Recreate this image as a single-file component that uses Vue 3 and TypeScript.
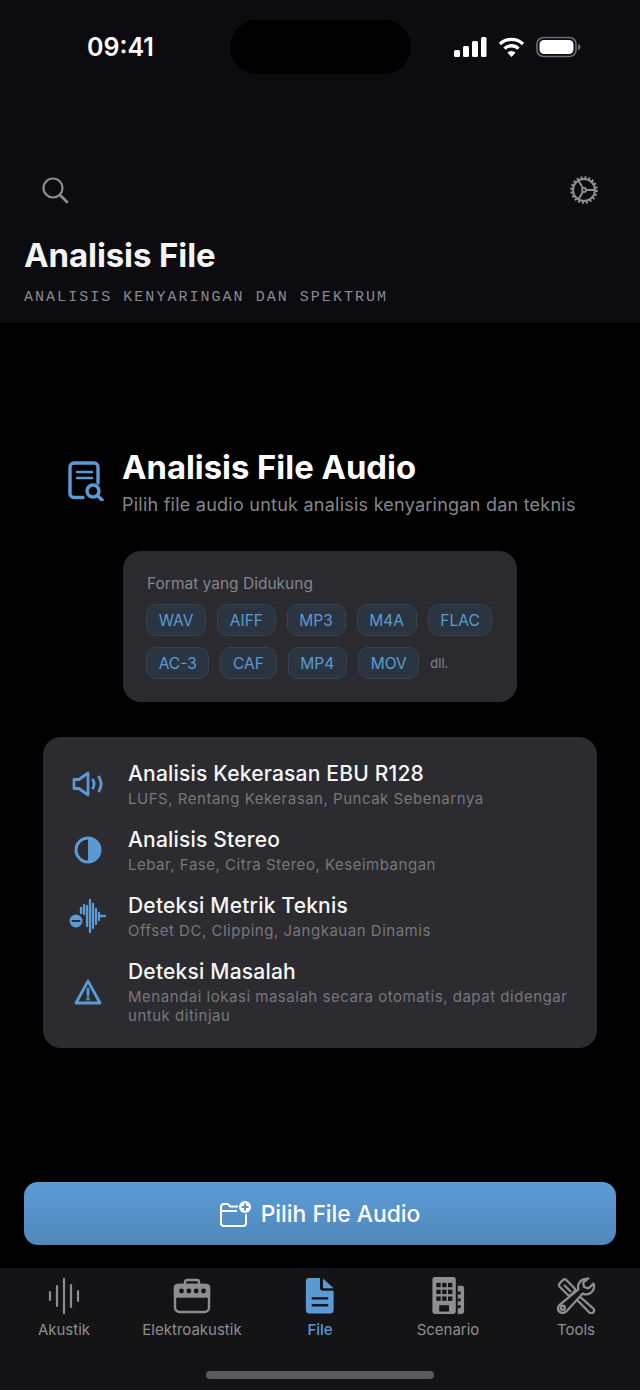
<template>
  <div class="screen">
    <header class="top">
      <div class="status">
        <span class="time">09:41</span>
        <div class="island"></div>
        <div class="status-icons">
          <svg width="33" height="22" viewBox="0 0 33 22" fill="#fff">
            <rect x="0" y="14" width="6" height="7" rx="1.500" />
            <rect x="9" y="10" width="6" height="11" rx="1.500" />
            <rect x="18" y="5" width="6" height="16" rx="1.500" />
            <rect x="27" y="1" width="5.500" height="20" rx="1.500" />
          </svg>
          <svg width="27" height="22" viewBox="0 0 26 22" fill="none" stroke="#fff" stroke-width="3.400">
            <path d="M1.500 8a16.500 16.500 0 0 1 23 0" />
            <path d="M6 12.600a10 10 0 0 1 14 0" />
            <path d="M13 21l-4-4.200a5.600 5.600 0 0 1 8 0z" fill="#fff" stroke="none" />
          </svg>
          <svg width="45" height="22" viewBox="0 0 45 22" fill="none">
            <rect x="1" y="1.500" width="39" height="19" rx="6.500" stroke="#6f6f72" stroke-width="1.600" />
            <rect x="3.500" y="4" width="34" height="14" rx="4.500" fill="#fff" />
            <path d="M42 8v6c1.500-.5 2.500-1.700 2.500-3S43.500 8.500 42 8z" fill="#6f6f72" />
          </svg>
        </div>
      </div>
      <div class="actions">
        <svg width="28" height="28" viewBox="0 0 28 28" fill="none" stroke="#8e8e92" stroke-width="2.200" stroke-linecap="round">
          <circle cx="12" cy="12" r="9.500" />
          <path d="M19 19l7 7" stroke-width="2.800" />
        </svg>
        <svg width="30" height="30" viewBox="0 0 30 30" fill="none" stroke="#8e8e92">
          <circle cx="15" cy="15" r="11" stroke-width="2" />
          <circle cx="15" cy="15" r="12.500" stroke-width="2.600" stroke-dasharray="2 1.927" />
          <circle cx="15" cy="15" r="2" stroke-width="1.800" />
          <path d="M17 15h8.500M14 13.300L9.500 5.800M14 16.700L9.500 24.200" stroke-width="2" />
        </svg>
      </div>
      <h1 class="page-title">Analisis File</h1>
      <p class="page-sub">ANALISIS KENYARINGAN DAN SPEKTRUM</p>
    </header>

    <main class="content">
      <section class="hero">
        <svg class="hero-icon" width="36" height="40" viewBox="0 0 36 40" fill="none" stroke="#5b9bd5" stroke-width="3.400" stroke-linecap="round">
          <path d="M15 36.500H6a4 4 0 0 1-4-4V6a4 4 0 0 1 4-4h20a4 4 0 0 1 4 4v16" />
          <path d="M9 11h15M9 17h15" stroke-width="2.400" />
          <circle cx="25" cy="30" r="6" />
          <path d="M30 35l4 4" />
        </svg>
        <div>
          <h2 class="hero-title">Analisis File Audio</h2>
          <p class="hero-sub">Pilih file audio untuk analisis kenyaringan dan teknis</p>
        </div>
      </section>

      <section class="formats">
        <div class="formats-label">Format yang Didukung</div>
        <div class="chips" v-for="(row, i) in formatRows" :key="i">
          <span class="chip" v-for="f in row" :key="f">{{ f }}</span>
          <span class="more" v-if="i === 1">dll.</span>
        </div>
      </section>

      <section class="features">
        <div class="feature">
          <div class="feature-icon">
            <svg width="32" height="26" viewBox="0 0 32 26" fill="none" stroke="#5b9bd5" stroke-width="2.800" stroke-linejoin="round" stroke-linecap="round">
              <path d="M2 8.500h5L16 2v22L7 17.500H2z" />
              <path d="M21 9c1.400 2.600 1.400 5.400 0 8M27 6c2.800 4.500 2.800 9.500 0 14" />
            </svg>
          </div>
          <div>
            <div class="feature-title">Analisis Kekerasan EBU R128</div>
            <div class="feature-sub">LUFS, Rentang Kekerasan, Puncak Sebenarnya</div>
          </div>
        </div>
        <div class="feature">
          <div class="feature-icon">
            <svg width="28" height="28" viewBox="0 0 28 28">
              <circle cx="14" cy="14" r="12" fill="none" stroke="#5b9bd5" stroke-width="3" />
              <path d="M14 2a12 12 0 0 1 0 24z" fill="#5b9bd5" />
            </svg>
          </div>
          <div>
            <div class="feature-title">Analisis Stereo</div>
            <div class="feature-sub">Lebar, Fase, Citra Stereo, Keseimbangan</div>
          </div>
        </div>
        <div class="feature">
          <div class="feature-icon">
            <svg width="38" height="34" viewBox="0 0 38 34" fill="none" stroke="#5b9bd5" stroke-width="2.300" stroke-linecap="round">
              <path d="M12 9v5M15 6v9M18 7v20M21 1v32M24 5v24M27 10v15M30 14v7M31 17h5" />
              <circle cx="7" cy="22" r="6.500" fill="#5b9bd5" stroke="none" />
              <path d="M3.500 22h7" stroke="#2b2b30" stroke-width="2.200" />
            </svg>
          </div>
          <div>
            <div class="feature-title">Deteksi Metrik Teknis</div>
            <div class="feature-sub">Offset DC, Clipping, Jangkauan Dinamis</div>
          </div>
        </div>
        <div class="feature">
          <div class="feature-icon">
            <svg width="28" height="26" viewBox="0 0 28 26" fill="none" stroke="#5b9bd5" stroke-width="2.800" stroke-linejoin="round">
              <path d="M14 2L2 24h24z" />
              <path d="M14 10v6.500" stroke-linecap="round" />
              <circle cx="14" cy="20" r="1.700" fill="#5b9bd5" stroke="none" />
            </svg>
          </div>
          <div>
            <div class="feature-title">Deteksi Masalah</div>
            <div class="feature-sub">Menandai lokasi masalah secara otomatis, dapat didengar untuk ditinjau</div>
          </div>
        </div>
      </section>

      <button class="pick">
        <svg width="31" height="26" viewBox="0 0 31 26" fill="none" stroke="#fff" stroke-width="2" stroke-linejoin="round">
          <path d="M18 5.500h-8L8 3H4a3 3 0 0 0-3 3v16a3 3 0 0 0 3 3h19a3 3 0 0 0 3-3v-9" />
          <path d="M1 10h16" />
          <circle cx="25" cy="6" r="6" fill="#fff" stroke="none" />
          <path d="M25 2.500v7M21.500 6h7" stroke="#5b97cf" stroke-width="2" />
        </svg>
        <span>Pilih File Audio</span>
      </button>
    </main>

    <nav class="tabs">
      <div class="tab">
        <svg width="32" height="36" viewBox="0 0 32 36" fill="none" stroke="#8e8e92" stroke-width="2.200" stroke-linecap="round">
          <path d="M2 14v8M9 8v20M16 1v34M23 7v22M30 13v10" />
        </svg>
        <span>Akustik</span>
      </div>
      <div class="tab">
        <svg width="38" height="36" viewBox="0 0 38 36" fill="none" stroke="#8e8e92" stroke-width="2.400">
          <path d="M12 7V4a2 2 0 0 1 2-2h10a2 2 0 0 1 2 2v3" />
          <rect x="2" y="7" width="34" height="27" rx="4.500" />
          <path d="M2 8.500a3 3 0 0 1 3-1.500h28a3 3 0 0 1 3 1.500V18.500H2z" fill="#8e8e92" />
          <circle cx="8.500" cy="13" r="2.400" fill="#141416" stroke="none" />
          <circle cx="15.800" cy="13" r="2.400" fill="#141416" stroke="none" />
          <circle cx="23.200" cy="13" r="2.400" fill="#141416" stroke="none" />
          <circle cx="30.500" cy="13" r="2.400" fill="#141416" stroke="none" />
        </svg>
        <span>Elektroakustik</span>
      </div>
      <div class="tab active">
        <svg width="30" height="38" viewBox="0 0 30 38">
          <path d="M4 1h11v10a3 3 0 0 0 3 3h11v20a3.500 3.500 0 0 1-3.500 3.500H4A3.500 3.500 0 0 1 .5 34V4.500A3.500 3.500 0 0 1 4 1z" fill="#5b9bd5" />
          <path d="M18 1.500l11 10H18z" fill="#5b9bd5" />
          <path d="M7.500 22h15M7.500 29h15" stroke="#141416" stroke-width="2.400" stroke-linecap="round" />
        </svg>
        <span>File</span>
      </div>
      <div class="tab">
        <svg width="34" height="38" viewBox="0 0 34 38" fill="#8e8e92">
          <rect x="1" y="0" width="24" height="38" rx="2.500" />
          <path d="M27 9h4a2.500 2.500 0 0 1 2.500 2.500V35.500A2.500 2.500 0 0 1 31 38h-4z" />
          <g fill="#141416">
            <rect x="5" y="6" width="4.500" height="4.500" />
            <rect x="11" y="6" width="4.500" height="4.500" />
            <rect x="17" y="6" width="4.500" height="4.500" />
            <rect x="5" y="13" width="4.500" height="4.500" />
            <rect x="11" y="13" width="4.500" height="4.500" />
            <rect x="17" y="13" width="4.500" height="4.500" />
            <rect x="5" y="20" width="4.500" height="4.500" />
            <rect x="11" y="20" width="4.500" height="4.500" />
            <rect x="17" y="20" width="4.500" height="4.500" />
            <rect x="8" y="29" width="10" height="6.500" />
            <rect x="27" y="15" width="3" height="3" />
            <rect x="27" y="22" width="3" height="3" />
            <rect x="27" y="29" width="3" height="3" />
          </g>
        </svg>
        <span>Scenario</span>
      </div>
      <div class="tab">
        <svg width="41" height="39" viewBox="0 0 41 39" fill="none" stroke="#8e8e92" stroke-width="2.400" stroke-linejoin="round" stroke-linecap="round">
          <rect x="2" y="6" width="17" height="10" rx="2.500" transform="rotate(45 10.500 11)" />
          <path d="M8 9l6 6" />
          <path d="M18 15.500l20 17.500c1.500 1.500 1.500 3 .2 4.300s-3 1.300-4.400-.2L16 19" />
          <path d="M31 2a8.500 8.500 0 0 0-8.500 11L3 29c-2.500 2.500-2.500 5.500-.5 7.500s5 2 7.500-.5l17-18.500a8.500 8.500 0 0 0 12-8l-.5-2.500-5.500 5-4.500-1.500-1-4.500 5.500-4.500z" fill="#141416" />
          <circle cx="6" cy="32.500" r="2.200" />
        </svg>
        <span>Tools</span>
      </div>
      <div class="home-bar"></div>
    </nav>
  </div>
</template>

<script setup lang="ts">
const formatRows: string[][] = [
  ['WAV', 'AIFF', 'MP3', 'M4A', 'FLAC'],
  ['AC-3', 'CAF', 'MP4', 'MOV']
]
</script>

<style>
html,
body {
  margin: 0;
  background: #000;
}
</style>

<style scoped>
.screen {
  width: 640px;
  height: 1390px;
  display: flex;
  flex-direction: column;
  overflow: hidden;
  background: #000;
  color: #fff;
  font-family: Inter, "Liberation Sans", sans-serif;
}

.top {
  height: 323px;
  box-sizing: border-box;
  padding-top: 20px;
  background: #0c0c10;
}

.status {
  height: 54px;
  display: grid;
  grid-template-columns: 1fr 181px 1fr;
  align-items: center;
}

.time {
  padding-left: 87px;
  font-size: 25px;
  font-weight: 600;
}

.island {
  height: 54px;
  border-radius: 27px;
  background: #000;
}

.status-icons {
  display: flex;
  align-items: center;
  gap: 11px;
  padding-left: 43px;
}

.actions {
  display: flex;
  justify-content: space-between;
  align-items: center;
  margin-top: 101px;
  padding: 0 41px 0 41px;
}

.page-title {
  margin: 30px 0 0 24px;
  font-size: 33px;
  line-height: 40px;
  font-weight: 700;
  color: #f4f4f4;
  letter-spacing: -0.1px;
}

.page-sub {
  margin: 14px 0 0 24px;
  font-family: "Liberation Mono", "DejaVu Sans Mono", monospace;
  font-size: 15px;
  line-height: 18px;
  letter-spacing: 2.030px;
  color: #8a8a8e;
}

.content {
  flex: 1;
  display: flex;
  flex-direction: column;
}

.hero {
  display: flex;
  align-items: flex-start;
  gap: 18px;
  margin: 125px 0 0 68px;
}

.hero-icon {
  margin-top: 13px;
}

.hero-title {
  margin: 0;
  font-size: 32.800px;
  line-height: 38px;
  font-weight: 700;
}

.hero-sub {
  margin: 7px 0 0;
  font-size: 18px;
  line-height: 24px;
  color: #85858a;
  letter-spacing: 0.24px;
  white-space: nowrap;
}

.formats {
  width: 394px;
  height: 151px;
  box-sizing: border-box;
  margin: 34px 0 0 123px;
  padding: 24px 23px;
  border-radius: 18px;
  background: #2a2a2f;
}

.formats-label {
  font-size: 15.500px;
  line-height: 18px;
  color: #85858a;
  margin-bottom: 11px;
  padding-left: 1px;
}

.chips {
  display: flex;
  align-items: center;
  gap: 11px;
  margin-bottom: 11px;
}

.chip {
  height: 32px;
  box-sizing: border-box;
  padding: 0 11.700px;
  display: flex;
  align-items: center;
  border: 1px solid #36434f;
  border-radius: 10px;
  background: #2b3541;
  color: #5b9bd5;
  font-size: 15.500px;
}

.more {
  font-size: 13px;
  color: #85858a;
}

.features {
  width: 554px;
  height: 311px;
  box-sizing: border-box;
  margin: 35px 0 0 43px;
  padding: 23px 24px 0 0;
  border-radius: 18px;
  background: #2b2b30;
}

.feature {
  display: flex;
  align-items: center;
  margin-bottom: 18px;
}

.feature-icon {
  width: 85px;
  flex-shrink: 0;
  box-sizing: border-box;
  padding-left: 5px;
  display: flex;
  justify-content: center;
}

.feature-title {
  font-size: 21px;
  line-height: 28px;
  font-weight: 500;
  color: #f6f6f6;
  letter-spacing: 0.2px;
}

.feature-sub {
  margin-top: 1px;
  font-size: 15px;
  line-height: 19px;
  color: #77777d;
  letter-spacing: 0.52px;
}

.pick {
  width: 592px;
  height: 63px;
  margin: 134px 0 0 24px;
  display: flex;
  align-items: center;
  justify-content: center;
  gap: 10px;
  border: none;
  border-radius: 14px;
  background: linear-gradient(#5c9cd7, #4f87ba);
  color: #fff;
  font-family: inherit;
  font-size: 22.800px;
  font-weight: 500;
}

.tabs {
  height: 122px;
  box-sizing: border-box;
  display: grid;
  grid-template-columns: repeat(5, 1fr);
  grid-template-rows: 62px 1fr;
  background: #141416;
  padding-top: 9px;
}

.tab {
  display: flex;
  flex-direction: column;
  align-items: center;
  justify-content: flex-end;
  gap: 7px;
  font-size: 15px;
  line-height: 18px;
  color: #8e8e92;
}

.tab.active {
  color: #5b9bd5;
  font-weight: 500;
}

.home-bar {
  grid-column: 1 / -1;
  justify-self: center;
  width: 228px;
  height: 8px;
  margin-top: 32px;
  border-radius: 4px;
  background: #5a5a5c;
}
</style>
